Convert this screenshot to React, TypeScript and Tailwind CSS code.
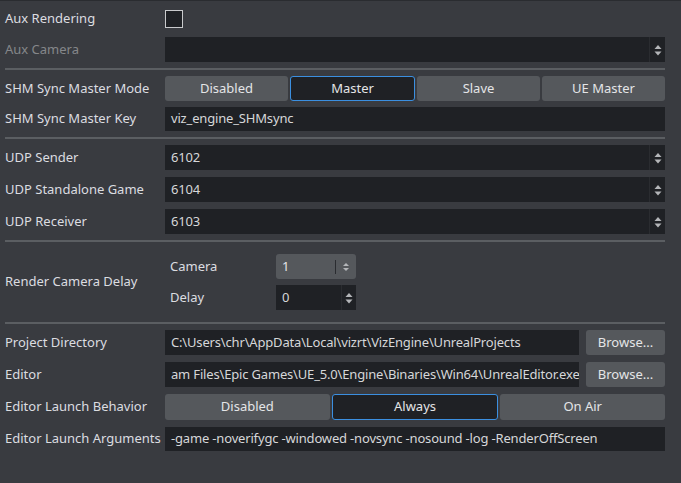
import React from "react";

const font = { fontFamily: '"Noto Sans", "Open Sans", sans-serif' };

function Arrows() {
  return (
    <svg width="10" height="16" viewBox="0 0 10 16" className="block">
      <polygon points="5,3 8.5,7 1.5,7" fill="#b4b6b9" />
      <polygon points="1.5,9.5 8.5,9.5 5,13.5" fill="#b4b6b9" />
    </svg>
  );
}

function Label({ children, dim = false }: { children: React.ReactNode; dim?: boolean }) {
  return (
    <div className={`w-[165px] shrink-0 pl-[5px] whitespace-nowrap ${dim ? "text-[#85878a]" : "text-[#dcdde0]"}`}>
      {children}
    </div>
  );
}

function Input({ value, spin = false }: { value: string; spin?: boolean }) {
  return (
    <div className="flex-1 min-w-0 h-full bg-[#1f2125] flex items-center overflow-hidden">
      <div className="flex-1 min-w-0 pl-[6px] text-[#d6d7d9] whitespace-nowrap overflow-hidden tracking-[-0.17px]">
        {value}
      </div>
      {spin && (
        <div className="w-[16px] h-full border-l border-[#2a2c30] flex items-center justify-center">
          <Arrows />
        </div>
      )}
    </div>
  );
}

function Segments({ items, active }: { items: string[]; active: number }) {
  return (
    <div className="flex-1 h-full flex gap-[2px]">
      {items.map((it, i) => (
        <div
          key={it}
          className={`flex-1 rounded-[3px] flex items-center justify-center text-[#e4e5e7] ${
            i === active ? "bg-[#1f2125] border border-[#3b8fe0]" : "bg-[#55585c]"
          }`}
        >
          {it}
        </div>
      ))}
    </div>
  );
}

function Sep() {
  return <div className="h-[2px] mr-[16px] ml-[5px] bg-[#5b5e62]" />;
}

function Row({ children, h = "h-[25px]" }: { children: React.ReactNode; h?: string }) {
  return <div className={`flex items-center ${h} pr-[16px]`}>{children}</div>;
}

export default function App() {
  return (
    <div style={font} className="w-[681px] h-[483px] bg-[#393b40] text-[13px] overflow-hidden">
      <div className="h-[1px] bg-[#2a2c30]" />
      <div className="flex flex-col gap-[6px] pt-[5px]">
        <Row>
          <Label>Aux Rendering</Label>
          <div className="w-[18px] h-[18px] border border-[#c9cacc] bg-[#1f2125]" />
        </Row>
        <Row>
          <Label dim>Aux Camera</Label>
          <Input value="" spin />
        </Row>
        <Sep />
        <Row>
          <Label>SHM Sync Master Mode</Label>
          <Segments items={["Disabled", "Master", "Slave", "UE Master"]} active={1} />
        </Row>
        <Row h="h-[24px]">
          <Label>SHM Sync Master Key</Label>
          <Input value="viz_engine_SHMsync" />
        </Row>
        <Sep />
        <div className="flex flex-col gap-[7px]">
          <Row>
            <Label>UDP Sender</Label>
            <Input value="6102" spin />
          </Row>
          <Row>
            <Label>UDP Standalone Game</Label>
            <Input value="6104" spin />
          </Row>
          <Row>
            <Label>UDP Receiver</Label>
            <Input value="6103" spin />
          </Row>
        </div>
        <Sep />
        <div className="flex items-center py-[6px] pr-[16px]">
          <Label>Render Camera Delay</Label>
          <div className="flex flex-col gap-[6px] pl-[5px]">
            <div className="flex items-center h-[25px]">
              <div className="w-[106px] text-[#dcdde0]">Camera</div>
              <div className="w-[80px] h-full bg-[#55585c] rounded-[3px] flex items-center">
                <div className="flex-1 pl-[6px] text-[#e4e5e7]">1</div>
                <div className="w-[1px] h-[14px] bg-[#2a2c30]" />
                <div className="w-[20px] flex items-center justify-center">
                  <svg width="8" height="14" viewBox="0 0 8 14">
                    <polygon points="4,3 7,6 1,6" fill="#b4b6b9" />
                    <polygon points="1,8 7,8 4,11" fill="#b4b6b9" />
                  </svg>
                </div>
              </div>
            </div>
            <div className="flex items-center h-[25px]">
              <div className="w-[106px] text-[#dcdde0]">Delay</div>
              <div className="w-[80px] h-full bg-[#1f2125] flex items-center">
                <div className="flex-1 pl-[6px] text-[#d6d7d9]">0</div>
                <div className="w-[15px] h-full border-l border-[#2a2c30] flex items-center justify-center">
                  <Arrows />
                </div>
              </div>
            </div>
          </div>
        </div>
        <Sep />
        <div className="flex flex-col gap-[7px]">
          <Row>
            <Label>Project Directory</Label>
            <div className="flex-1 min-w-0 h-full flex gap-[7px]">
              <Input value="C:\Users\chr\AppData\Local\vizrt\VizEngine\UnrealProjects" />
              <div className="w-[79px] shrink-0 h-full bg-[#55585c] rounded-[3px] flex items-center justify-center text-[#e4e5e7]">
                Browse...
              </div>
            </div>
          </Row>
          <Row>
            <Label>Editor</Label>
            <div className="flex-1 min-w-0 h-full flex gap-[7px]">
              <Input value="am Files\Epic Games\UE_5.0\Engine\Binaries\Win64\UnrealEditor.exe" />
              <div className="w-[79px] shrink-0 h-full bg-[#55585c] rounded-[3px] flex items-center justify-center text-[#e4e5e7]">
                Browse...
              </div>
            </div>
          </Row>
          <Row h="h-[26px]">
            <Label>Editor Launch Behavior</Label>
            <Segments items={["Disabled", "Always", "On Air"]} active={1} />
          </Row>
          <Row h="h-[24px]">
            <Label>Editor Launch Arguments</Label>
            <Input value="-game -noverifygc -windowed -novsync -nosound -log -RenderOffScreen" />
          </Row>
        </div>
      </div>
    </div>
  );
}
